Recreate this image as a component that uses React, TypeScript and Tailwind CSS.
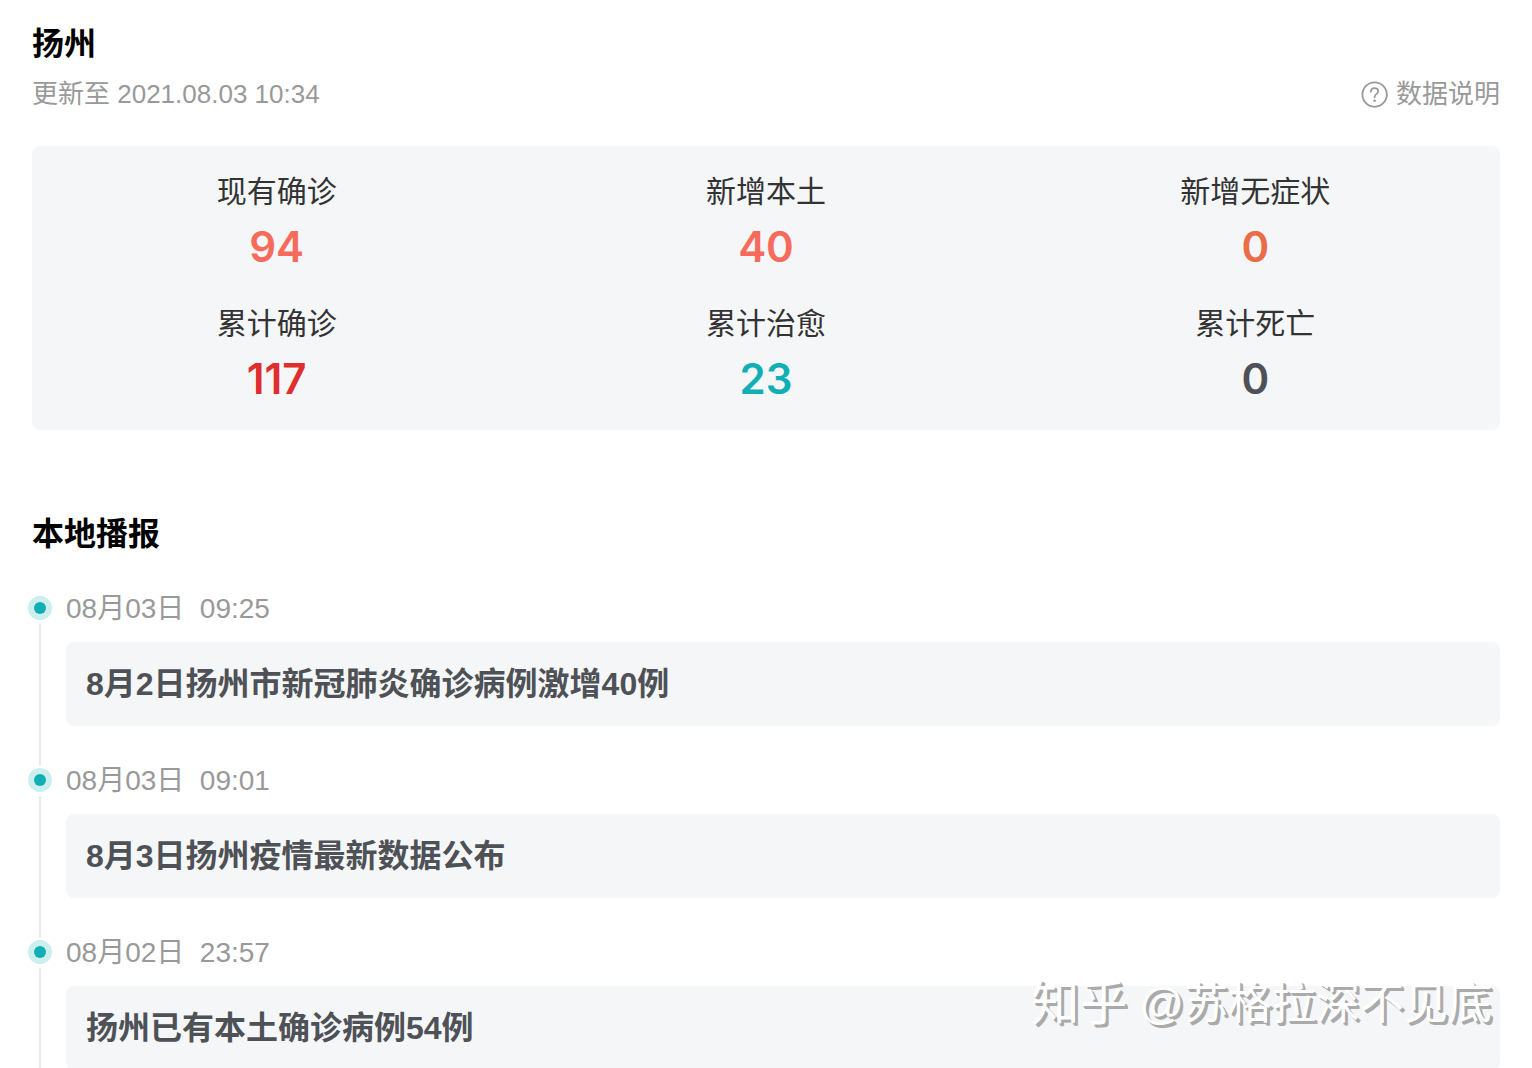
import React from 'react';

interface Stat {
    label: string;
    value: number;
    color: string;
}

interface Report {
    date: string;
    time: string;
    title: string;
}

const stats: Stat[] = [
    { label: '现有确诊', value: 94, color: 'text-[#f66b5c]' },
    { label: '新增本土', value: 40, color: 'text-[#f66b5c]' },
    { label: '新增无症状', value: 0, color: 'text-[#e86d48]' },
    { label: '累计确诊', value: 117, color: 'text-[#e02d2d]' },
    { label: '累计治愈', value: 23, color: 'text-[#10aeb5]' },
    { label: '累计死亡', value: 0, color: 'text-[#4e5156]' },
];

const reports: Report[] = [
    { date: '08月03日', time: '09:25', title: '8月2日扬州市新冠肺炎确诊病例激增40例' },
    { date: '08月03日', time: '09:01', title: '8月3日扬州疫情最新数据公布' },
    { date: '08月02日', time: '23:57', title: '扬州已有本土确诊病例54例' },
];

const HelpIcon: React.FC = () => (
    <svg className="size-7" viewBox="0 0 28 28" fill="none" stroke="currentColor" strokeWidth="1.8" aria-hidden="true">
        <circle cx="14.6" cy="14.6" r="12.2" />
        <path d="M10.9 11.8c0-2.2 1.5-3.6 3.6-3.6s3.6 1.3 3.6 3.3c0 2.5-3.5 2.8-3.5 5.2v.6" strokeLinecap="round" />
        <circle cx="14.6" cy="20.8" r="1.3" fill="currentColor" stroke="none" />
    </svg>
);

const StatItem: React.FC<{ stat: Stat }> = ({ stat }) => (
    <div className="flex flex-col items-center">
        <dt className="text-[30px] leading-10 text-[#333333]">{stat.label}</dt>
        <dd className={`mt-2 font-[Inter,sans-serif] text-[42px] leading-[54px] font-semibold ${stat.color}`}>{stat.value}</dd>
    </div>
);

const ReportItem: React.FC<{ report: Report }> = ({ report }) => (
    <li className="flex gap-[14px]">
        {/* Timeline marker */}
        <div className="-mb-1 flex w-6 shrink-0 flex-col items-center gap-1 pt-[6px]">
            <span className="flex size-6 shrink-0 items-center justify-center rounded-full bg-[#cceeef]">
                <span className="size-3 rounded-full bg-[#10aeb5]" />
            </span>
            <span className="w-0.5 flex-1 bg-[#ebebeb]" />
        </div>

        <div className="min-w-0 flex-1 pb-9">
            <time className="block text-[28px] leading-[38px] whitespace-pre text-[#999999]">{report.date}  {report.time}</time>
            <a href="#" className="mt-[14px] block rounded-lg bg-[#f5f6f8] px-5 py-[18px] text-[32px] leading-[48px] font-bold text-[#4e5156]">
                {report.title}
            </a>
        </div>
    </li>
);

const App: React.FC = () => {
    return (
        <div className="relative h-screen overflow-hidden bg-white px-8 pt-5 font-['Liberation_Sans','Noto_Sans_CJK_SC',sans-serif]">
            <header>
                <h1 className="text-[32px] leading-[48px] font-bold text-black">扬州</h1>
                <div className="flex items-center justify-between text-[26px] leading-[52px] text-[#999999]">
                    <p>更新至 2021.08.03 10:34</p>
                    <button type="button" className="flex items-center gap-2">
                        <HelpIcon />
                        数据说明
                    </button>
                </div>
            </header>

            {/* City totals */}
            <dl className="mt-[26px] grid grid-cols-3 gap-y-[30px] rounded-lg bg-[#f5f6f8] pt-[26px] pb-6">
                {stats.map((stat) => (
                    <StatItem key={stat.label} stat={stat} />
                ))}
            </dl>

            {/* Local news */}
            <section className="mt-20">
                <h2 className="text-[32px] leading-[48px] font-bold text-black">本地播报</h2>
                <ol className="mt-8 -ml-1">
                    {reports.map((report) => (
                        <ReportItem key={report.time} report={report} />
                    ))}
                </ol>
            </section>

            {/* Watermark */}
            <div className="pointer-events-none absolute right-10 bottom-8 flex items-center gap-3 text-[44px] leading-[64px] text-white [text-shadow:2px_2px_0_#aaaaaa,3px_3px_0_#aaaaaa]">
                <span className="text-[48px]">知乎</span>
                <span>@苏格拉深不见底</span>
            </div>
        </div>
    );
};

export default App;
